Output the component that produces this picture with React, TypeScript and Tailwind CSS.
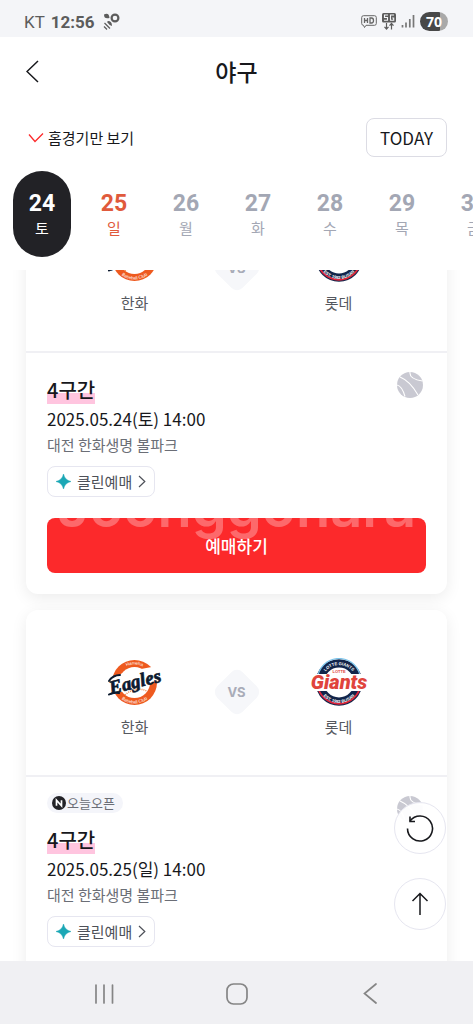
import { useState } from "react";

const DAYS = [
  { date: 24, day: "토" },
  { date: 25, day: "일" },
  { date: 26, day: "월" },
  { date: 27, day: "화" },
  { date: 28, day: "수" },
  { date: 29, day: "목" },
  { date: 30, day: "금" },
];

const GAMES = [
  { id: 1, title: "4구간", time: "2025.05.24(토) 14:00", place: "대전 한화생명 볼파크", openToday: false },
  { id: 2, title: "4구간", time: "2025.05.25(일) 14:00", place: "대전 한화생명 볼파크", openToday: true },
];

const StatusBar = () => (
  <div className="flex h-[37px] shrink-0 items-center justify-between bg-[#f4f5f8] pt-[6px] pl-6 pr-[25px] font-['Roboto',sans-serif] text-[17px] leading-5 text-[#5c5c5c]">
    <div className="flex items-center gap-[6px]">
      <span>KT</span>
      <span className="font-bold">12:56</span>
      <svg width="17" height="17" viewBox="0 0 17 17" className="ml-[2px]">
        <path d="M1 1.500Q6-1 6.500 5Q1 6.500 1 1.500Z" fill="#5c5c5c" />
        <circle cx="12" cy="5" r="3.400" fill="none" stroke="#5c5c5c" strokeWidth="2.200" />
        <path d="M5 8Q9 8 9 13Q6 12 4 9Z" fill="#5c5c5c" />
        <path d="M1.500 10L7 15.500M1 13.500L4 16.500" stroke="#5c5c5c" strokeWidth="1.200" />
      </svg>
    </div>
    <div className="flex items-center gap-[5px]">
      <svg width="16" height="14" viewBox="0 0 16 14" fill="none" stroke="#666" strokeWidth="1">
        <path d="M2.500.7H13.500Q15.300.7 15.300 2.500V8.500Q15.300 10.300 13.500 10.300H5L3.500 12.500L2.500 10.300Q.7 10.300.7 8.500V2.500Q.7.7 2.500.7Z" />
        <path d="M3.500 3V8M6.500 3V8M3.500 5.500H6.500M9 3V8H10.500Q12.500 8 12.500 5.500Q12.500 3 10.500 3Z" strokeWidth="1.300" />
      </svg>
      <svg width="14" height="17" viewBox="0 0 14 17" fill="none">
        <rect x="0" y="0" width="14" height="9.500" rx="1.500" fill="#5c5c5c" />
        <path d="M6 2H2.500V4.500H5.500V7.300H2M12 2H8.500V7.300H11.700V5H10.300" stroke="#f4f5f8" strokeWidth="1.100" />
        <path d="M4.500 10V16M2.500 13.800L4.500 16L6.500 13.800M9.500 16.500V10.500M7.500 12.700L9.500 10.500L11.500 12.700" stroke="#5c5c5c" strokeWidth="1.200" />
      </svg>
      <svg width="14" height="13" viewBox="0 0 14 13" stroke="#777" strokeWidth="1.700">
        <path d="M1.500 10V12.500M5 7.500V12.500M8.800 4V12.500M12.500 0V12.500" />
      </svg>
      <span className="flex h-[19px] w-7 items-center justify-center rounded-full bg-linear-to-r from-[#484848] from-70% to-[#a9a9a9] to-70% font-['Noto_Sans',sans-serif] text-sm leading-[19px] font-bold text-white">
        70
      </span>
    </div>
  </div>
);

const EaglesLogo = () => (
  <svg width="60" height="48" viewBox="0 0 60 48" role="img" aria-label="Hanwha Eagles">
    <defs>
      <path id="eagles-top" d="M11.500 24.500A18 18 0 0 1 47.500 24.500" />
      <path id="eagles-bottom" d="M8.500 24.500A21 21 0 0 0 50.500 24.500" />
    </defs>
    <circle cx="29.500" cy="24.500" r="22.500" fill="#ee5a1f" />
    <circle cx="29.500" cy="24.500" r="15.500" fill="#fff" />
    <path d="M20 15Q29 21 40 12M20 37Q30 28 42 33" fill="none" stroke="#f08a54" strokeWidth="1.500" strokeDasharray="1 1" />
    <g fill="#fff" fontFamily="Liberation Sans, sans-serif" fontSize="4.500" textAnchor="middle">
      <text><textPath href="#eagles-top" startOffset="50%">Hanwha</textPath></text>
      <text><textPath href="#eagles-bottom" startOffset="50%">Baseball Club</textPath></text>
    </g>
    <path d="M5 21L20 14L52 8L57 19L40 29L22 32L6 37Z" fill="#fff" />
    <text
      x="30"
      y="30"
      transform="rotate(-14 30 24)"
      textAnchor="middle"
      fontFamily="Liberation Serif, serif"
      fontSize="19"
      fontWeight="700"
      fontStyle="italic"
      fill="#0c1a2f"
      stroke="#0c1a2f"
      strokeWidth="0.700"
    >
      Eagles
    </text>
    <path d="M4 23Q8 17 15 17M4 36.500Q8 34 14 35" fill="none" stroke="#0c1a2f" strokeWidth="2" strokeLinecap="round" />
  </svg>
);

const GiantsLogo = () => (
  <svg width="60" height="48" viewBox="0 0 60 48" role="img" aria-label="Lotte Giants">
    <defs>
      <path id="giants-top" d="M12.500 24.500A17.500 17.500 0 0 1 47.500 24.500" />
      <path id="giants-bottom" d="M9.500 24.500A20.500 20.500 0 0 0 50.500 24.500" />
    </defs>
    <circle cx="30" cy="24.500" r="23.300" fill="#12254a" />
    <path d="M8.500 22A21.500 21.500 0 0 1 51.500 22" fill="none" stroke="#7cc4ea" strokeWidth="1.200" />
    <path d="M8.500 27A21.700 21.700 0 0 0 51.500 27" fill="none" stroke="#e0243a" strokeWidth="1.800" />
    <circle cx="30" cy="24.500" r="15" fill="#fff" />
    <g fill="#fff" fontFamily="Liberation Sans, sans-serif" fontSize="4.200" fontWeight="700" textAnchor="middle">
      <text><textPath href="#giants-top" startOffset="50%">LOTTE GIANTS</textPath></text>
      <text><textPath href="#giants-bottom" startOffset="50%">EST. 1982 BUSAN</textPath></text>
    </g>
    <text x="30" y="15" textAnchor="middle" fontFamily="Liberation Sans, sans-serif" fontSize="4" fontWeight="700" fill="#e0443c">
      LOTTE
    </text>
    <path d="M4 16H57L55 33H1Z" fill="#fff" />
    <text
      x="30"
      y="31"
      textAnchor="middle"
      fontFamily="Roboto, sans-serif"
      fontSize="20"
      fontWeight="900"
      fontStyle="italic"
      fill="#e0443c"
    >
      Giants
    </text>
  </svg>
);

const BallIcon = () => (
  <svg width="26" height="26" viewBox="0 0 26 26" className="shrink-0">
    <circle cx="13" cy="13" r="13" fill="#c9c9d2" />
    <path d="M13 0Q12 7 25.500 9M0 13Q5 14 8 24.500M3 5Q13 9 21 23" fill="none" stroke="#fff" strokeWidth="1.100" />
  </svg>
);

const Team = ({ name, children }) => (
  <div className="flex w-24 flex-col items-center gap-[11px]">
    {children}
    <span className="text-[15px] leading-5 text-[#55585f]">{name}</span>
  </div>
);

const GameCard = ({ game }) => (
  <article className="rounded-xl bg-white shadow-[0_4px_16px_rgba(0,0,0,0.08)]">
    <div className="flex h-[167px] items-start justify-center gap-8 border-b-2 border-[#f0f0f4] pt-12">
      <Team name="한화">
        <EaglesLogo />
      </Team>
      <div className="relative mt-4 flex h-9 w-11 items-center justify-center">
        <span className="absolute size-9 rotate-45 rounded-lg bg-[#f6f7fa]" />
        <span className="relative pt-px font-['Inter',sans-serif] text-[13px] font-bold text-[#a9acb8]">VS</span>
      </div>
      <Team name="롯데">
        <GiantsLogo />
      </Team>
    </div>

    <div className="px-[21px] pb-[21px]">
      <div className="flex items-start justify-between">
        <div className="flex flex-col items-start">
          {game.openToday && (
            <span className="-mb-[10px] mt-4 flex h-5 items-center gap-px rounded-full bg-[#f4f5fa] pl-[5px] pr-2 text-[13px] leading-5 text-[#6b6e76]">
              <svg width="14" height="14" viewBox="0 0 14 14">
                <circle cx="7" cy="7" r="7" fill="#222226" />
                <path d="M4.500 9.800V4.200L9.500 9.800V4.200" fill="none" stroke="#fff" strokeWidth="1.700" />
              </svg>
              오늘오픈
            </span>
          )}
          <h2 className="mt-[23px] h-7 bg-linear-to-b from-transparent from-60% to-[#ffc5df] to-60% text-xl leading-7 font-medium">
            {game.title}
          </h2>
          <p className="mt-[2px] text-[17px] leading-[26px]">{game.time}</p>
          <p className="mt-[2px] text-[15px] leading-[22px] text-[#6b6e76]">{game.place}</p>
        </div>
        <div className="pt-[19px] pr-[3px]">
          <BallIcon />
        </div>
      </div>
      <button
        type="button"
        className="mt-[10px] flex h-[31px] items-center gap-[6px] rounded-lg border border-[#e6e6f0] px-2 text-[15px] leading-5 text-[#4d5058]"
      >
        <svg width="15" height="15" viewBox="0 0 15 15">
          <path d="M7.500 0Q8.800 6.200 15 7.500Q8.800 8.800 7.500 15Q6.200 8.800 0 7.500Q6.200 6.200 7.500 0Z" fill="#1ba7b5" stroke="#1ba7b5" strokeWidth="0.500" />
        </svg>
        클린예매
        <svg width="8" height="13" viewBox="0 0 8 13" fill="none" stroke="#4d5058" strokeWidth="1.200">
          <path d="M1 1L6.800 6.500L1 12" />
        </svg>
      </button>
      <button
        type="button"
        className="relative mt-[21px] flex h-[55px] w-full items-center justify-center overflow-hidden rounded-lg bg-[#fc292b] text-[17px] font-medium text-white"
      >
        <span
          aria-hidden="true"
          className="absolute inset-x-0 -top-[43px] text-center font-['Inter',sans-serif] text-[56px] leading-[64px] font-semibold text-white/30"
        >
          Joonggonara
        </span>
        <span className="relative">예매하기</span>
      </button>
    </div>
  </article>
);

export default function App() {
  const [selected, setSelected] = useState(24);
  const [homeOnly, setHomeOnly] = useState(true);

  const dayColor = (date, day) => {
    if (date === selected) return "bg-[#222226] text-white";
    if (day === "일") return "text-[#e05a3c]";
    return "text-[#a3a7b4]";
  };

  return (
    <div className="flex h-screen flex-col overflow-hidden bg-white font-['Noto_Sans_CJK_KR',sans-serif] text-[#17181c]">
      <StatusBar />

      <header className="grid h-[68px] shrink-0 grid-cols-[1fr_auto_1fr] items-center px-[26px]">
        <button type="button" aria-label="뒤로" className="justify-self-start">
          <svg width="13" height="23" viewBox="0 0 13 23" fill="none" stroke="#17181c" strokeWidth="1.500">
            <path d="M12 1L1 11.500L12 22" />
          </svg>
        </button>
        <h1 className="text-[23px] leading-8 font-medium">야구</h1>
      </header>

      <div className="flex shrink-0 items-center justify-between pt-[13px] pr-[26px] pl-7">
        <label className="flex items-center gap-1 text-[15px] leading-5">
          <input
            type="checkbox"
            className="peer sr-only"
            checked={homeOnly}
            onChange={(e) => setHomeOnly(e.target.checked)}
          />
          <svg width="16" height="11" viewBox="0 0 16 11" fill="none" stroke="#fc292b" strokeWidth="1.300" className="opacity-30 peer-checked:opacity-100">
            <path d="M1 2.500L7 9.500L15 1.500" />
          </svg>
          홈경기만 보기
        </label>
        <button
          type="button"
          onClick={() => setSelected(24)}
          className="h-[39px] rounded-lg border border-[#dcdce4] px-[13px] text-[17px] leading-5"
        >
          TODAY
        </button>
      </div>

      <nav className="flex shrink-0 gap-[14px] overflow-hidden pt-[14px] pb-[13px] pl-[13px]">
        {DAYS.map(({ date, day }) => (
          <button
            key={date}
            type="button"
            onClick={() => setSelected(date)}
            className={`flex h-[86px] w-[58px] shrink-0 flex-col items-center rounded-full pt-5 ${dayColor(date, day)}`}
          >
            <span className="font-['Roboto',sans-serif] text-[23px] leading-[26px] font-bold">{date}</span>
            <span className="text-[15px] leading-[22px]">{day}</span>
          </button>
        ))}
      </nav>

      <div className="relative min-h-0 flex-1 overflow-hidden">
        <main className="-mt-[84px] flex flex-col gap-4 px-[26px]">
          {GAMES.map((game) => (
            <GameCard key={game.id} game={game} />
          ))}
        </main>

        <div className="absolute right-[27px] bottom-[31px] flex flex-col gap-6">
          <button type="button" aria-label="새로고침" className="flex size-[52px] items-center justify-center rounded-full border border-[#e6e6f0] bg-white/95">
            <svg width="28" height="28" viewBox="0 0 28 28" fill="none" stroke="#17181c" strokeWidth="1.600">
              <path d="M1.500 14.500A12.500 12.500 0 1 0 4 7" />
              <path d="M4 2.500V7.500H9" />
            </svg>
          </button>
          <button type="button" aria-label="맨 위로" className="flex size-[52px] items-center justify-center rounded-full border border-[#e6e6f0] bg-white/95">
            <svg width="18" height="24" viewBox="0 0 18 24" fill="none" stroke="#17181c" strokeWidth="1.500">
              <path d="M9 23V1.500M1.500 9L9 1.500L16.500 9" />
            </svg>
          </button>
        </div>
      </div>

      <footer className="grid h-[63px] shrink-0 grid-cols-3 place-items-center bg-[#f0f0f3] px-[37px] pt-[2px]">
        <button type="button" aria-label="최근 앱">
          <svg width="20" height="20" viewBox="0 0 20 20" stroke="#858585" strokeWidth="1.700" strokeLinecap="round">
            <path d="M2 1V19M10 1V19M18.500 1V19" />
          </svg>
        </button>
        <button type="button" aria-label="홈">
          <svg width="22" height="22" viewBox="0 0 22 22" fill="none" stroke="#858585" strokeWidth="1.700">
            <rect x="1" y="1" width="20" height="20" rx="6.500" />
          </svg>
        </button>
        <button type="button" aria-label="이전">
          <svg width="14" height="21" viewBox="0 0 14 21" fill="none" stroke="#858585" strokeWidth="1.700" strokeLinecap="round">
            <path d="M13 1L1.500 10.500L13 20" />
          </svg>
        </button>
      </footer>
    </div>
  );
}
